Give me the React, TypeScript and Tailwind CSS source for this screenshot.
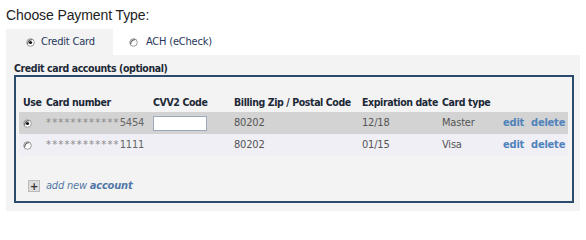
import React from 'react';

function Radio({ checked }: { checked?: boolean }) {
  return (
    <svg width="9" height="9" viewBox="0 0 9 9" className="shrink-0">
      <circle cx="4.5" cy="4.5" r="3.8" fill="#fff" stroke="#9a9a9a" strokeWidth="1" />
      <path d="M1.8 6.2 A3.8 3.8 0 0 1 6.2 1.8" fill="none" stroke="#555" strokeWidth="1.1" />
      {checked && <circle cx="4.5" cy="4.5" r="1.6" fill="#111" />}
    </svg>
  );
}

const ROWS = [
  { last4: '5454', zip: '80202', exp: '12/18', type: 'Master', checked: true },
  { last4: '1111', zip: '80202', exp: '01/15', type: 'Visa', checked: false }
];

const GRID = 'grid grid-cols-[27px_107px_81px_128px_80px_61px_28px_1fr] items-center whitespace-nowrap';

export default function App() {
  return (
    <div className="h-[211px] w-[586px] overflow-hidden bg-white font-['DejaVu_Sans_Condensed','DejaVu_Sans',Verdana,sans-serif] text-[11px] font-stretch-condensed tracking-[-0.2px]">
      <h1 className="pl-[6px] pt-[7px] font-['Liberation_Sans',Arial,sans-serif] text-[14px] leading-[17px] tracking-[-0.1px] text-[#222]">
        Choose Payment Type:
      </h1>

      {/* Tabs */}
      <div className="mt-[5px] ml-[6px] flex h-[26px] w-[574px]">
        <div className="flex w-[107px] items-center gap-[6px] bg-[#f3f3f3] pl-[20px] text-[#25365a]">
          <Radio checked />
          <span>Credit Card</span>
        </div>
        <div className="flex items-center gap-[8px] pl-[16px] text-[#25365a]">
          <Radio />
          <span>ACH (eCheck)</span>
        </div>
      </div>

      {/* Panel */}
      <div className="ml-[6px] h-[180px] w-[574px] bg-[#f3f3f3] pl-[8px] pt-[7px]">
        <div className="text-[10.5px] font-bold leading-[13px] tracking-[-0.4px] text-[#1c2836]">
          Credit card accounts (optional)
        </div>
        <div className="w-[560px] border-2 border-[#2c4a6b] pb-[6px] pl-[3px] pr-[4px] pt-[16px]">
          <div className={`${GRID} h-[19px] text-[10.5px] font-bold tracking-[-0.4px] text-[#1c2836]`}>
            <span className="pl-[4px]">Use</span>
            <span>Card number</span>
            <span>CVV2 Code</span>
            <span>Billing Zip / Postal Code</span>
            <span>Expiration date</span>
            <span>Card type</span>
            <span />
            <span />
          </div>
          {ROWS.map((r) => (
            <div
              key={r.last4}
              className={`${GRID} h-[22px] text-[#555] ${r.checked ? 'bg-[#d3d3d3]' : 'bg-[#efeff5]'}`}
            >
              <span className="pl-[4px]">
                <Radio checked={r.checked} />
              </span>
              <span className="text-[#666]">
                <span className="tracking-[1.2px] text-[#888]">************</span>
                {r.last4}
              </span>
              <span>
                {r.checked && (
                  <span className="block h-[15px] w-[54px] border border-[#98aabb] bg-white" />
                )}
              </span>
              <span>{r.zip}</span>
              <span>{r.exp}</span>
              <span>{r.type}</span>
              <a className="font-bold text-[#5082bb]">edit</a>
              <a className="font-bold text-[#5082bb]">delete</a>
            </div>
          ))}
          <div className="mt-[22px] flex items-center gap-[6px] pl-[9px] italic text-[#5278a8]">
            <span className="flex h-[12px] w-[12px] items-center justify-center border border-[#bbb] bg-[#ddd] text-[11px] font-bold not-italic leading-none text-[#333]">
              +
            </span>
            <span>
              add new <b>account</b>
            </span>
          </div>
        </div>
      </div>
    </div>
  );
}
